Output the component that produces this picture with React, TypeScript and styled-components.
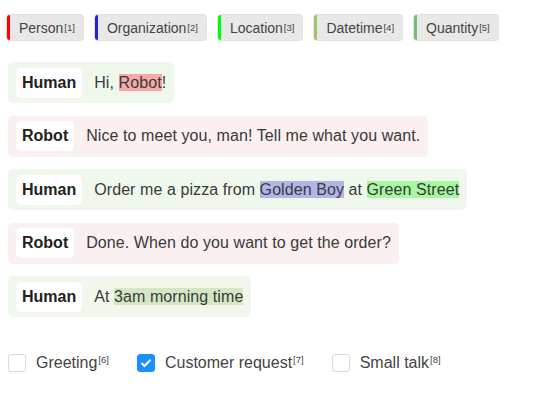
import React from "react";
import styled, { createGlobalStyle } from "styled-components";

const Global = createGlobalStyle`
  html, body { margin: 0; padding: 0; background: #fff; }
  body { font-family: "Liberation Sans", Arial, sans-serif; color: #333; }
`;

const Page = styled.div`
  padding: 15px 8px 0 7px;
  width: 552px;
  height: 408px;
  box-sizing: border-box;
`;

const Labels = styled.div`
  display: flex;
  gap: 12px;
  margin-bottom: 22px;
`;

const Label = styled.div<{ $color: string }>`
  height: 25px;
  box-sizing: border-box;
  display: flex;
  align-items: center;
  padding: 0 8px 0 9px;
  background: #e8e8e8;
  border-left: 3px solid ${(p) => p.$color};
  border-radius: 3px;
  box-shadow: 0 0 0 1px #e2e2e2;
  font-size: 14px;
  color: #444;
`;

const Sup = styled.sup`
  font-size: 9.5px;
  line-height: 0;
  vertical-align: 5px;
  margin-left: 1px;
`;

const Dialog = styled.div`
  display: flex;
  flex-direction: column;
  align-items: flex-start;
  gap: 12.5px;
  padding-left: 1px;
`;

const Row = styled.div<{ $robot?: boolean }>`
  height: 41px;
  box-sizing: border-box;
  display: flex;
  align-items: center;
  gap: 12px;
  padding: 0 8px;
  border-radius: 5px;
  background: ${(p) => (p.$robot ? "#f9f0ef" : "#f0f8ee")};
  font-size: 16px;
  color: #3a3a3a;
`;

const Name = styled.div`
  height: 30px;
  display: flex;
  align-items: center;
  padding: 0 6px;
  background: #fff;
  border-radius: 5px;
  font-weight: bold;
  color: #222;
`;

const Text = styled.div`
  white-space: pre;
  letter-spacing: 0.08px;
`;

const Mark = styled.span<{ $bg: string }>`
  background: ${(p) => p.$bg};
`;

const Choices = styled.div`
  display: flex;
  align-items: center;
  gap: 28px;
  margin-top: 37px;
  padding-left: 1px;
`;

const Choice = styled.label`
  display: flex;
  align-items: center;
  gap: 10px;
  font-size: 16px;
  color: #444;
`;

const Box = styled.span<{ $checked?: boolean }>`
  width: 18px;
  height: 18px;
  box-sizing: border-box;
  border-radius: 3px;
  border: 1px solid ${(p) => (p.$checked ? "#1890ff" : "#d9d9d9")};
  background: ${(p) => (p.$checked ? "#1890ff" : "#fff")};
  display: flex;
  align-items: center;
  justify-content: center;
`;

const labels = [
  { name: "Person", color: "#ff0000" },
  { name: "Organization", color: "#2222dd" },
  { name: "Location", color: "#00ff00" },
  { name: "Datetime", color: "#a4c46c" },
  { name: "Quantity", color: "#70c07a" },
];

export default function App() {
  return (
    <>
      <Global />
      <Page>
        <Labels>
          {labels.map((l, i) => (
            <Label key={l.name} $color={l.color}>
              {l.name}
              <Sup>[{i + 1}]</Sup>
            </Label>
          ))}
        </Labels>
        <Dialog>
          <Row>
            <Name>Human</Name>
            <Text>
              Hi, <Mark $bg="#f5aaa8">Robot</Mark>!
            </Text>
          </Row>
          <Row $robot>
            <Name>Robot</Name>
            <Text>Nice to meet you, man! Tell me what you want.</Text>
          </Row>
          <Row>
            <Name>Human</Name>
            <Text>
              Order me a pizza from <Mark $bg="#b3b5e9">Golden Boy</Mark> at{" "}
              <Mark $bg="#a7f6a0">Green Street</Mark>
            </Text>
          </Row>
          <Row $robot>
            <Name>Robot</Name>
            <Text>Done. When do you want to get the order?</Text>
          </Row>
          <Row>
            <Name>Human</Name>
            <Text>
              At <Mark $bg="#d5e6c4">3am morning time</Mark>
            </Text>
          </Row>
        </Dialog>
        <Choices>
          <Choice>
            <Box />
            <span>
              Greeting<Sup>[6]</Sup>
            </span>
          </Choice>
          <Choice>
            <Box $checked>
              <svg width="12" height="10" viewBox="0 0 12 10">
                <path d="M1.5 5 L4.5 8 L10.5 1.8" fill="none" stroke="#fff" strokeWidth="2" />
              </svg>
            </Box>
            <span>
              Customer request<Sup>[7]</Sup>
            </span>
          </Choice>
          <Choice>
            <Box />
            <span>
              Small talk<Sup>[8]</Sup>
            </span>
          </Choice>
        </Choices>
      </Page>
    </>
  );
}
